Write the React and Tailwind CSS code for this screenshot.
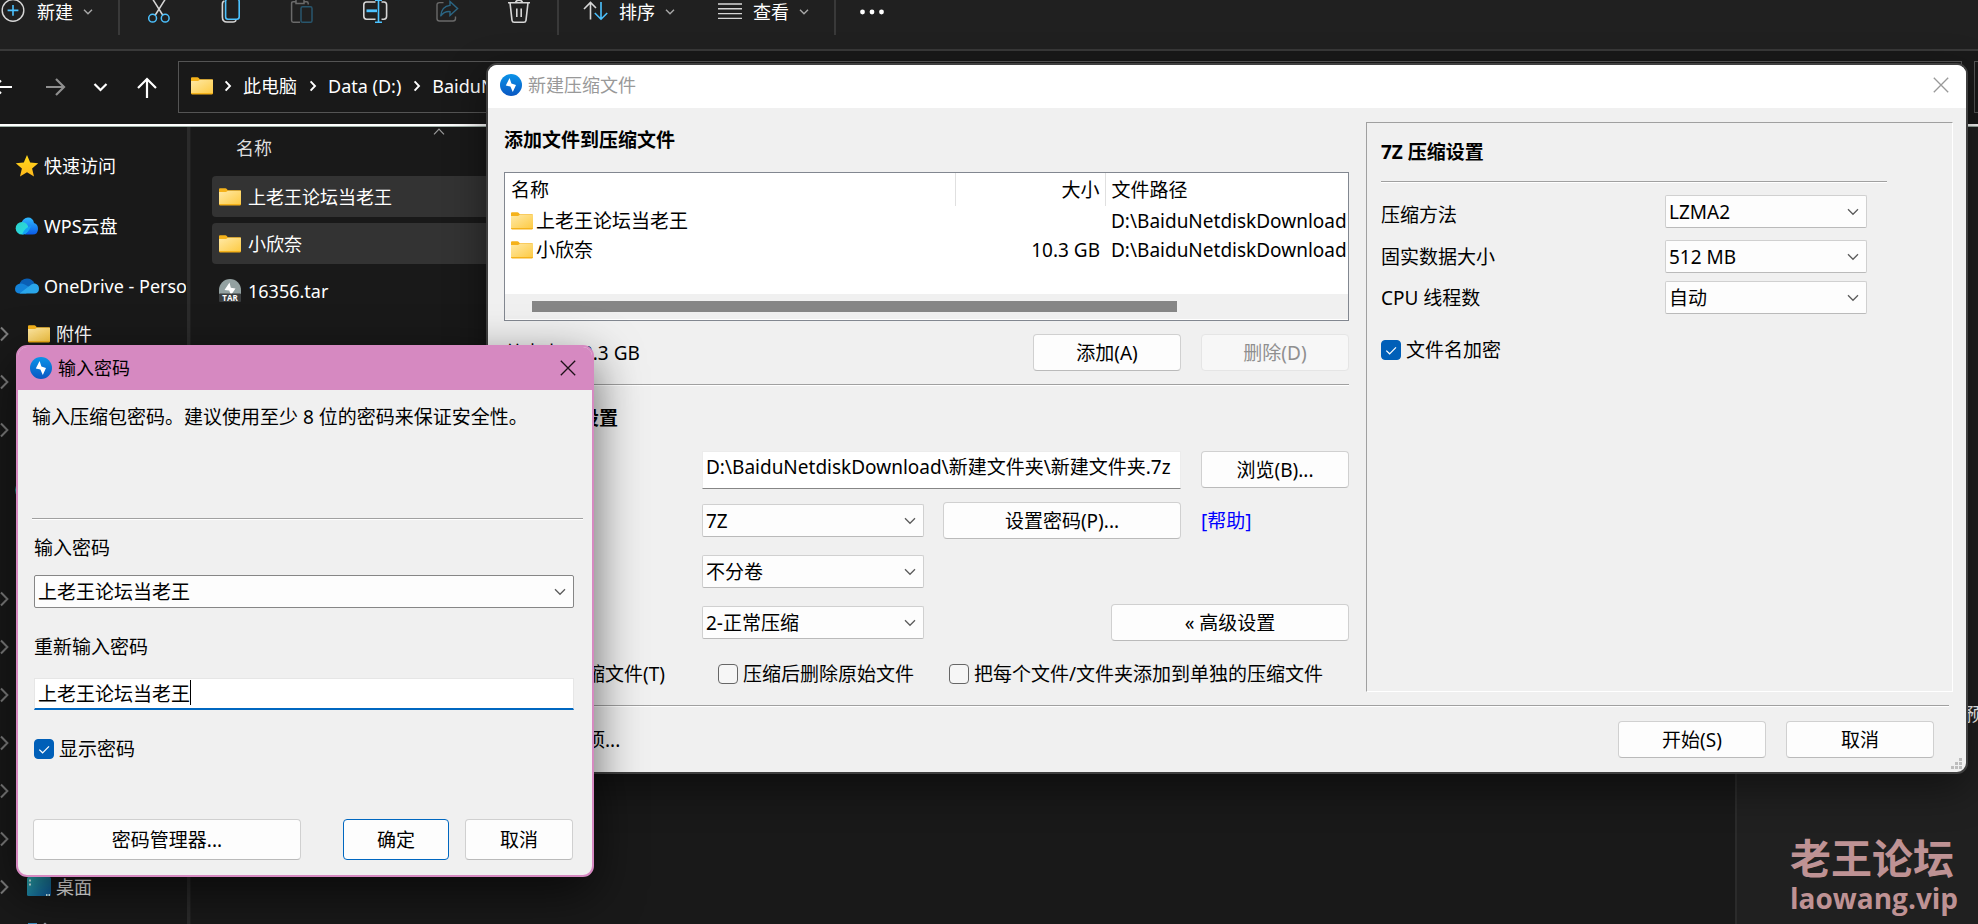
import React from "react";

const UI = "font-['Noto_Sans','Noto_Sans_CJK_SC',sans-serif]";

function Folder({ className = "" }) {
  return (
    <svg viewBox="0 0 22 18" className={"h-[18px] w-[22px] shrink-0 " + className} aria-hidden="true">
      <defs>
        <linearGradient id="folderFill" x1="0" y1="0" x2="1" y2="1">
          <stop offset="0" stopColor="#ffe9a6" />
          <stop offset="1" stopColor="#fdcb45" />
        </linearGradient>
      </defs>
      <path d="M0 1.2Q0 .3 1 .3H6.4Q7.2 .3 7.8 1L8.8 2.2H21Q22 2.2 22 3.2V16.6Q22 17.4 21 17.4H1Q0 17.4 0 16.6Z" fill="#f5b21a" />
      <path d="M0 4H7L9 2.8H22V16H0Z" fill="url(#folderFill)" />
    </svg>
  );
}

function BoltLogo() {
  return (
    <svg viewBox="0 0 22 22" className="size-[22px] shrink-0" aria-hidden="true">
      <defs>
        <linearGradient id="boltFill" x1="0" y1="0" x2="0" y2="1">
          <stop offset="0" stopColor="#0a93e8" />
          <stop offset="1" stopColor="#0a57c2" />
        </linearGradient>
      </defs>
      <circle cx="11" cy="11" r="11" fill="url(#boltFill)" />
      <path d="M9.6 4L5.8 11.6L10.4 12.6L12.8 18L16 10.9L11.4 9.6Z" fill="#fff" />
    </svg>
  );
}

function Close({ className }) {
  return (
    <svg viewBox="0 0 16 16" className={"size-4 " + className} fill="none" stroke="currentColor" strokeWidth="1.3" aria-hidden="true">
      <path d="M.8 .8L15.2 15.2M15.2 .8L.8 15.2" />
    </svg>
  );
}

function ChevronDown({ className = "" }) {
  return (
    <svg viewBox="0 0 12 8" className={"h-2 w-3 " + className} fill="none" stroke="currentColor" strokeWidth="1.3" aria-hidden="true">
      <path d="M1 1.2L6 6.3L11 1.2" />
    </svg>
  );
}

function SmallDown() {
  return (
    <svg viewBox="0 0 10 6" className="h-[6px] w-[10px]" fill="none" stroke="#a8a8a8" strokeWidth="1.4" aria-hidden="true">
      <path d="M1 .8L5 4.8L9 .8" />
    </svg>
  );
}

function Crumb() {
  return (
    <svg viewBox="0 0 8 12" className="h-3 w-2 shrink-0" fill="none" stroke="#fff" strokeWidth="1.9" aria-hidden="true">
      <path d="M1.6 1.4L6 6L1.6 10.6" />
    </svg>
  );
}

function TreeChevron() {
  return (
    <svg viewBox="0 0 9 16" className="h-4 w-[9px] shrink-0" fill="none" stroke="#7d7d7d" strokeWidth="2" aria-hidden="true">
      <path d="M1 1.5L7.4 8L1 14.5" />
    </svg>
  );
}

function Divider() {
  return <div className="h-[35px] w-[2px] bg-[#393939]" />;
}

function Toolbar() {
  const tool = "flex h-6 items-center justify-center";
  return (
    <div className="flex h-[51px] items-start border-b-2 border-[#393939] bg-[#202020] text-[18px] leading-6 text-white">
      <button className="flex w-[118px] shrink-0 items-center">
        <svg viewBox="0 0 24 24" className="ml-px h-6 w-6" fill="none" aria-hidden="true">
          <circle cx="12" cy="10.4" r="10.8" stroke="#d6d6d6" strokeWidth="1.4" />
          <path d="M12 5V15.800M6.600 10.400H17.400" stroke="#4cc2ff" strokeWidth="1.600" />
        </svg>
        <span className="ml-3">新建</span>
        <span className="ml-[10px]"><SmallDown /></span>
      </button>
      <Divider />
      <div className="flex w-[437px] shrink-0 justify-between pl-[27px] pr-[26px]">
        <button aria-label="剪切" className={tool}>
          <svg viewBox="0 0 24 24" className="size-6" fill="none" strokeWidth="1.500" aria-hidden="true">
            <path d="M5 -2L16 15.500M19 -2L8 15.500" stroke="#d6d6d6" />
            <circle cx="5.600" cy="18.200" r="3.900" stroke="#4cc2ff" />
            <circle cx="18.200" cy="18.200" r="3.900" stroke="#4cc2ff" />
          </svg>
        </button>
        <button aria-label="复制" className={tool}>
          <svg viewBox="0 0 24 24" className="size-6" fill="none" strokeWidth="1.600" aria-hidden="true">
            <path d="M5.500 1Q3.400 1.500 3.400 4V17Q3.400 22 8 22H14Q16.600 22 17 20.200" stroke="#d6d6d6" />
            <rect x="6.600" y="-1" width="13.600" height="20.200" rx="2.400" stroke="#4cc2ff" />
          </svg>
        </button>
        <button aria-label="粘贴" className={tool}>
          <svg viewBox="0 0 24 24" className="size-6" fill="none" strokeWidth="1.500" aria-hidden="true">
            <path d="M10 22.300H3.200Q1.600 22.300 1.600 20.600V3.400Q1.600 1.700 3.200 1.700H6M14 1.700H16.600Q18.200 1.700 18.200 3.400V4.500M6 0V3.400H14V0" stroke="#6a6a6a" />
            <rect x="11" y="6.800" width="11" height="15.500" rx="1.600" stroke="#28566d" />
          </svg>
        </button>
        <button aria-label="重命名" className={tool}>
          <svg viewBox="0 0 26 24" className="h-6 w-[26px]" fill="none" strokeWidth="1.600" aria-hidden="true">
            <path d="M13.500 2H4.500Q1.800 2 1.800 4.700V16.300Q1.800 19.200 4.500 19.200H13.500M19.500 2H22Q24.600 2 24.600 4.700V16.300Q24.600 19.200 22 19.200H19.500" stroke="#d6d6d6" />
            <path d="M16.500 -1V22M13 .200H20M13 22.300H20" stroke="#4cc2ff" />
            <path d="M4.500 10.800H15" stroke="#4cc2ff" strokeWidth="2.800" />
          </svg>
        </button>
        <button aria-label="共享" className={tool}>
          <svg viewBox="0 0 24 24" className="size-6" fill="none" strokeWidth="1.400" aria-hidden="true">
            <path d="M8.500 2.600H4.500Q2 2.600 2 5.100V18.500Q2 21 4.500 21H18Q20.500 21 20.500 18.500V16.500" stroke="#6a6a6a" />
            <path d="M15 1.600L22.600 8.600L15 15.400V11.600Q9 11.200 5.600 16.200Q6.600 6.200 15 5.400Z" stroke="#2b6684" />
          </svg>
        </button>
        <button aria-label="删除" className={tool}>
          <svg viewBox="0 0 24 24" className="size-6" fill="none" stroke="#d6d6d6" strokeWidth="1.600" aria-hidden="true">
            <path d="M1 2.700H23M8.600 2.400Q9 .200 12 .200Q15 .200 15.400 2.400M3 2.700L5 20.300Q5.300 22.200 7.200 22.200H16.800Q18.700 22.200 19 20.300L21 2.700M9.800 8.500V17M14.200 8.500V17" />
          </svg>
        </button>
      </div>
      <Divider />
      <button className="ml-[24px] flex items-center">
        <svg viewBox="0 0 26 24" className="h-6 w-[26px]" fill="none" strokeWidth="1.600" aria-hidden="true">
          <path d="M7.500 19.500V2.500M1 9L7.500 2.500L13 8" stroke="#d6d6d6" />
          <path d="M18 2V19M11.800 13L18 19.200L24.200 13" stroke="#4cc2ff" />
        </svg>
        <span className="ml-[10px]">排序</span>
        <span className="ml-[10px]"><SmallDown /></span>
      </button>
      <button className="ml-[43px] flex items-center">
        <svg viewBox="0 0 24 24" className="size-6" stroke="#d6d6d6" strokeWidth="1.400" aria-hidden="true">
          <path d="M0 4H24M0 8.800H24M0 13.600H24M0 18.400H24" />
        </svg>
        <span className="ml-[11px]">查看</span>
        <span className="ml-[10px]"><SmallDown /></span>
      </button>
      <div className="ml-[25px]"><Divider /></div>
      <button aria-label="更多" className="ml-[24px] flex h-6 items-center">
        <svg viewBox="0 0 24 6" className="h-[6px] w-6" fill="#fff" aria-hidden="true">
          <circle cx="2.500" cy="3" r="2.400" />
          <circle cx="12" cy="3" r="2.400" />
          <circle cx="21.500" cy="3" r="2.400" />
        </svg>
      </button>
    </div>
  );
}

function AddressBar() {
  return (
    <div className="flex h-[73px] items-start bg-[#191919] pt-[10px] text-[18px] leading-6 text-white">
      <div className="flex h-[52px] w-[178px] shrink-0 items-center">
        <svg viewBox="0 0 160 24" className="h-6 w-[160px]" fill="none" strokeWidth="2.200" aria-hidden="true">
          <path d="M12 12H-8M1 5.500L-6 12L1 18.500" stroke="#fff" />
          <path d="M46 12H64M56 4L64 12L56 20" stroke="#8f8f8f" />
          <path d="M94.500 9L100.500 15L106.500 9" stroke="#fff" />
          <path d="M147 23V4.500M138 13L147 4L156 13" stroke="#fff" />
        </svg>
      </div>
      <div className="flex h-[52px] min-w-0 flex-1 items-center overflow-hidden whitespace-nowrap border border-[#545454] pb-[2px] pl-3">
        <Folder />
        <span className="ml-[11px]"><Crumb /></span>
        <span className="ml-[11px]">此电脑</span>
        <span className="ml-[12px]"><Crumb /></span>
        <span className="ml-[11px]">Data (D:)</span>
        <span className="ml-[12px]"><Crumb /></span>
        <span className="ml-[11px]">BaiduNetdiskDownload</span>
      </div>
      <div className="ml-3 h-[52px] w-1 shrink-0 border border-r-0 border-[#545454]" />
    </div>
  );
}

function Sidebar() {
  const top = "flex h-12 items-center gap-[5px] pl-[15px]";
  const child = "flex h-12 items-center";
  return (
    <nav className="w-[186px] shrink-0 overflow-hidden whitespace-nowrap pt-[15px] text-[18px] leading-6 text-white">
      <div className="flex flex-col gap-3">
        <div className={top}>
          <svg viewBox="0 0 24 24" className="size-6 shrink-0" aria-hidden="true">
            <defs>
              <linearGradient id="star" x1="0" y1="0" x2="0" y2="1">
                <stop offset="0" stopColor="#ffd91a" />
                <stop offset="1" stopColor="#ffb81c" />
              </linearGradient>
            </defs>
            <path d="M12 1L15.200 8.600L23.200 9.300L17.100 14.600L19 22.600L12 18.300L5 22.600L6.900 14.600L.800 9.300L8.800 8.600Z" fill="url(#star)" />
          </svg>
          快速访问
        </div>
        <div className={top}>
          <svg viewBox="0 0 24 18" className="h-[18px] w-6 shrink-0" aria-hidden="true">
            <defs>
              <linearGradient id="cloudA" x1="0" y1="0" x2="1" y2="1">
                <stop offset="0" stopColor="#2bd0c8" />
                <stop offset="1" stopColor="#2adbe8" />
              </linearGradient>
              <linearGradient id="cloudB" x1="0" y1="0" x2="0" y2="1">
                <stop offset="0" stopColor="#2fb9ff" />
                <stop offset="1" stopColor="#0b5be8" />
              </linearGradient>
            </defs>
            <path d="M6 7Q8 .500 13 .500Q18 .500 19 6Q23 7 23 12Q23 17.500 17.500 17.500H10Z" fill="url(#cloudB)" />
            <circle cx="7" cy="11.300" r="6.300" fill="url(#cloudA)" />
            <path d="M7 17.600Q13 17.600 16 9Q10 10 7 17.600Z" fill="#12a5f5" />
          </svg>
          WPS云盘
        </div>
        <div className={top}>
          <svg viewBox="0 0 24 16" className="h-4 w-6 shrink-0" aria-hidden="true">
            <path d="M4 7Q6 .500 12 .500Q17 .500 19.500 5.500L12 11Z" fill="#0a5fb5" />
            <path d="M5 15.600Q0 15.600 0 10.800Q.500 6 6 5.600Q9 5.600 17 11L11 15.600Z" fill="#1382d8" />
            <path d="M4.500 15.600L14 8.200Q17 5.300 20 5.500Q24 6.500 24 10.800Q24 15.600 19 15.600Z" fill="#2aa6ea" />
          </svg>
          OneDrive - Personal
        </div>
      </div>
      <div className={child}>
        <TreeChevron />
        <Folder className="ml-[19px]" />
        <span className="ml-[6px]">附件</span>
      </div>
      <div className={child}><TreeChevron /></div>
      <div className={child}><TreeChevron /></div>
      <div className="mt-3 flex h-12 items-center pl-[15px]">
        <div className="size-5 rounded-full bg-[#1a9c94]" />
      </div>
      <div className="mt-[13px] h-12" />
      {[1, 2, 3, 4, 5, 6].map((n) => (
        <div key={n} className={child}><TreeChevron /></div>
      ))}
      <div className={child}>
        <TreeChevron />
        <svg viewBox="0 0 24 20" className="ml-[18px] h-5 w-6 shrink-0" aria-hidden="true">
          <defs>
            <linearGradient id="desk" x1="0" y1="0" x2="1" y2="1">
              <stop offset="0" stopColor="#2fb5b5" />
              <stop offset="1" stopColor="#0d5aa0" />
            </linearGradient>
          </defs>
          <rect width="24" height="19" rx="1.500" fill="url(#desk)" />
          <path d="M2 3.500H4M2 7.500H4M19 18H20.500M21.500 18H23" stroke="#dff" strokeWidth="2" />
        </svg>
        <span className="ml-[5px]">桌面</span>
      </div>
      <div className={child}>
        <svg viewBox="0 0 24 26" className="ml-[27px] h-[26px] w-6 shrink-0" aria-hidden="true">
          <rect x="1" y="1" width="9" height="24" fill="#3b8fc0" />
          <path d="M14 4L18 .500L22 4V25H14Z" fill="#9aa3ad" />
        </svg>
      </div>
    </nav>
  );
}

function FileRow({ icon, name, selected }) {
  return (
    <div className={"flex h-[41px] items-center gap-[7px] rounded-sm pl-[7px] " + (selected ? "bg-[#333333]" : "")}>
      {icon}
      <span>{name}</span>
    </div>
  );
}

function FileList() {
  return (
    <main className="min-w-0 flex-1 overflow-hidden text-[18px] leading-6 text-white">
      <div className="flex h-[49px] items-center pl-[45px] text-[#dedede]">
        <span className="mb-2">名称</span>
        <svg viewBox="0 0 12 7" className="mb-[40px] ml-[161px] h-[7px] w-3" fill="none" stroke="#9a9a9a" strokeWidth="1.200" aria-hidden="true">
          <path d="M1 6.300L6 1.200L11 6.300" />
        </svg>
      </div>
      <div className="flex flex-col gap-[6px] pl-[21px]">
        <FileRow selected icon={<Folder />} name="上老王论坛当老王" />
        <FileRow selected icon={<Folder />} name="小欣奈" />
        <FileRow
          name="16356.tar"
          icon={
            <svg viewBox="0 0 22 24" className="h-6 w-[22px] shrink-0" aria-hidden="true">
              <path d="M0 15V11A11 11 0 0 1 22 11V15Z" fill="#93a1a1" />
              <path d="M10.500 3.500L5.500 11L10.200 11.600L12 16L16.500 9.600L11.800 8.800Z" fill="#fff" />
              <rect y="14.500" width="22" height="8.500" rx="1" fill="#3a3d3f" />
              <text x="11" y="21.600" textAnchor="middle" fontFamily="Open Sans" fontWeight="700" fontSize="8" fill="#fff">TAR</text>
            </svg>
          }
        />
      </div>
    </main>
  );
}

function PushButton({ children, className = "", disabled }) {
  return (
    <button
      disabled={disabled}
      className={
        "h-[37px] shrink-0 rounded-[4px] border text-center leading-[24px] " +
        (disabled
          ? "border-[#e5e5e5] bg-[#f7f7f7] text-[#8f8f8f] "
          : "border-[#d0d0d0] border-b-[#bababa] bg-[#fdfdfd] text-black ") +
        className
      }
    >
      {children}
    </button>
  );
}

function Select({ id, value, className = "", border = "border-[#d0d0d0] border-b-[#bababa]", label }) {
  return (
    <div className={"relative shrink-0 " + className}>
      <select
        id={id}
        aria-label={label}
        defaultValue={value}
        className={"block h-[33px] w-full appearance-none rounded-[2px] border bg-[#fdfdfd] pl-[3px] pr-8 leading-[24px] text-black " + border}
      >
        <option>{value}</option>
      </select>
      <ChevronDown className="pointer-events-none absolute right-[8px] top-[13px] text-[#5c5c5c]" />
    </div>
  );
}

function Check({ label, checked, className = "" }) {
  return (
    <label className={"flex items-center gap-[5px] whitespace-nowrap " + className}>
      <span className="relative flex size-5 shrink-0">
        <input
          type="checkbox"
          defaultChecked={checked}
          className="peer size-5 appearance-none rounded-[4px] border border-[#666] bg-[#f6f6f6] checked:border-[#005fb8] checked:bg-[#005fb8]"
        />
        <svg viewBox="0 0 20 20" className="pointer-events-none absolute inset-0 hidden size-5 peer-checked:block" fill="none" stroke="#fff" strokeWidth="1.200" aria-hidden="true">
          <path d="M5.300 10.600L8.600 13.800L15 7.300" />
        </svg>
      </span>
      {label}
    </label>
  );
}

function Rule({ className = "" }) {
  return <div className={"h-[2px] shrink-0 border-b border-t border-b-white border-t-[#a0a0a0] " + className} />;
}

function ArchiveDialog() {
  const files = [
    { name: "上老王论坛当老王", size: "" },
    { name: "小欣奈", size: "10.3 GB" },
  ];
  return (
    <section
      aria-label="新建压缩文件"
      className="absolute left-[486px] right-[10px] top-[63px] overflow-hidden rounded-[11px] border-2 border-[#3f3f3f] bg-[#f0f0f0] text-[19px] leading-6 text-black shadow-[0_14px_40px_rgba(0,0,0,0.45)]"
    >
      <header className="flex h-[43px] items-center bg-white pb-[3px] pl-3 pr-[17px] text-[18px] text-[#999]">
        <BoltLogo />
        <h1 className="ml-[6px] flex-1">新建压缩文件</h1>
        <button aria-label="关闭"><Close className="text-[#999]" /></button>
      </header>

      <div className="flex gap-[17px] pl-4 pr-[13px]">
        <div className="min-w-0 flex-1 pt-5">
          <h2 className="font-bold">添加文件到压缩文件</h2>
          <div className="mt-5 h-[149px] overflow-hidden border border-[#828790] bg-white">
            <div className="mr-px h-[121px] overflow-hidden">
              <table className="w-full table-fixed border-collapse whitespace-nowrap">
                <thead>
                  <tr className="h-[33px] text-left">
                    <th className="w-[450px] border-r border-[#e0e0e0] p-0 pl-[6px] font-normal">名称</th>
                    <th className="w-[150px] border-r border-[#e0e0e0] p-0 pr-[5px] text-right font-normal">大小</th>
                    <th className="p-0 pl-[6px] font-normal">文件路径</th>
                  </tr>
                </thead>
                <tbody>
                  {files.map((f) => (
                    <tr key={f.name} className="h-[29px]">
                      <td className="p-0 pl-[6px]">
                        <span className="flex items-center gap-[3px]"><Folder />{f.name}</span>
                      </td>
                      <td className="p-0 pr-[5px] text-right">{f.size}</td>
                      <td className="overflow-hidden p-0 pl-[6px]">D:\BaiduNetdiskDownload</td>
                    </tr>
                  ))}
                </tbody>
              </table>
            </div>
            <div className="h-[25px] bg-[#f0f0f0] pl-[27px] pt-[7px]">
              <div className="h-[11px] w-[79%] bg-[#868686]" />
            </div>
          </div>

          <div className="mt-[13px] flex items-center gap-5">
            <p className="flex-1">总大小: 10.3 GB</p>
            <PushButton className="w-[148px]">添加(A)</PushButton>
            <PushButton className="w-[148px]" disabled>删除(D)</PushButton>
          </div>
          <Rule className="mt-[13px]" />

          <h2 className="mt-5 font-bold">压缩文件设置</h2>
          <div className="mt-[21px] flex flex-col gap-[14px]">
            <div className="flex h-[37px] items-center gap-5">
              <div className="flex min-w-0 flex-1 items-center">
                <label htmlFor="path" className="w-[198px] shrink-0">文件路径</label>
                <input
                  id="path"
                  defaultValue="D:\BaiduNetdiskDownload\新建文件夹\新建文件夹.7z"
                  className="h-[38px] min-w-0 flex-1 border border-[#ececec] border-b-[#868686] bg-white pb-[8px] pl-[3px] leading-[24px]"
                />
              </div>
              <PushButton className="w-[148px]">浏览(B)...</PushButton>
            </div>
            <div className="flex h-[37px] items-center">
              <label htmlFor="format" className="w-[198px] shrink-0">压缩格式</label>
              <Select id="format" value="7Z" className="w-[222px]" />
              <PushButton className="ml-[19px] mr-5 min-w-[120px] flex-1">设置密码(P)...</PushButton>
              <div className="w-[148px]"><a href="#help" className="text-[#0000ff]">[帮助]</a></div>
            </div>
            <div className="flex h-[37px] items-center">
              <label htmlFor="split" className="w-[198px] shrink-0">分卷大小</label>
              <Select id="split" value="不分卷" className="w-[222px]" />
            </div>
            <div className="flex h-[37px] items-center">
              <label htmlFor="level" className="w-[198px] shrink-0">压缩级别</label>
              <Select id="level" value="2-正常压缩" className="w-[222px]" />
              <PushButton className="ml-auto w-[238px]">« 高级设置</PushButton>
            </div>
            <div className="flex h-[37px] items-center">
              <Check label="测试压缩文件(T)" className="w-[214px]" />
              <Check label="压缩后删除原始文件" className="w-[231px]" />
              <Check label="把每个文件/文件夹添加到单独的压缩文件" />
            </div>
          </div>
        </div>

        <aside className="mt-[14px] w-[587px] shrink-0 border border-b-white border-l-[#a0a0a0] border-r-white border-t-[#a0a0a0] pl-[14px]">
          <h2 className="mt-[17px] font-bold">7Z 压缩设置</h2>
          <Rule className="mr-[65px] mt-[17px]" />
          <div className="mr-[85px] mt-3 flex flex-col">
            <div className="flex h-[45px] items-start justify-between">
              <label htmlFor="method" className="mt-2">压缩方法</label>
              <Select id="method" value="LZMA2" className="w-[202px]" />
            </div>
            <div className="flex h-[41px] items-start justify-between">
              <label htmlFor="solid" className="mt-[5px]">固实数据大小</label>
              <Select id="solid" value="512 MB" className="w-[202px]" />
            </div>
            <div className="flex items-start justify-between">
              <label htmlFor="threads" className="mt-[5px]">CPU 线程数</label>
              <Select id="threads" value="自动" className="w-[202px]" />
            </div>
          </div>
          <Check label="文件名加密" checked className="mt-6 w-fit" />
        </aside>
      </div>

      <Rule className="ml-4 mr-[17px] mt-[13px]" />
      <footer className="flex items-center gap-5 pb-[14px] pl-[79px] pr-8 pt-[14px]">
        <button className="mr-auto">选项...</button>
        <PushButton className="w-[148px]">开始(S)</PushButton>
        <PushButton className="w-[148px]">取消</PushButton>
      </footer>
      <svg viewBox="0 0 12 12" className="absolute bottom-[2px] right-[3px] size-3" fill="#bdbdbd" aria-hidden="true">
        <path d="M8 0h3v3h-3zM4 4h3v3h-3zM8 4h3v3h-3zM0 8h3v3h-3zM4 8h3v3h-3zM8 8h3v3h-3z" />
      </svg>
    </section>
  );
}

function PasswordDialog() {
  return (
    <section
      aria-label="输入密码"
      className="absolute left-[16px] top-[345px] w-[578px] overflow-hidden rounded-[11px] border-2 border-[#d689c1] bg-[#f0f0f0] text-[19px] leading-6 text-black shadow-[0_16px_48px_rgba(0,0,0,0.6)]"
    >
      <header className="flex h-[43px] items-center bg-[#d689c1] pb-[2px] pl-3 pr-4 text-[18px]">
        <BoltLogo />
        <h1 className="ml-[6px] flex-1">输入密码</h1>
        <button aria-label="关闭"><Close className="text-[#1c1018]" /></button>
      </header>
      <div className="pl-4 pr-[18px]">
        <p className="ml-[-2px] mt-[15px] h-[113px] whitespace-nowrap">输入压缩包密码。建议使用至少 8 位的密码来保证安全性。</p>
        <Rule className="ml-[-2px] mr-[-9px]" />
        <label htmlFor="pwd" className="mt-4 block">输入密码</label>
        <Select id="pwd" value="上老王论坛当老王" className="mt-[15px] w-full" border="border-[#868686]" />
        <label htmlFor="pwd2" className="mt-[27px] block">重新输入密码</label>
        <div className="relative mt-[19px]">
          <input
            id="pwd2"
            defaultValue="上老王论坛当老王"
            className="block h-[32px] w-full border border-b-2 border-[#e6e6e6] border-b-[#0067c0] bg-white pb-[2px] pl-[3px] leading-[24px] outline-none"
          />
          <span className="absolute left-[156px] top-[2px] h-[25px] w-px bg-black" />
        </div>
        <Check label="显示密码" checked className="mt-[27px] w-fit" />
        <div className="mb-[15px] ml-[-1px] mt-[58px] flex items-center">
          <button className="h-[41px] w-[268px] rounded-[4px] border border-[#d0d0d0] border-b-[#bababa] bg-[#fdfdfd]">密码管理器...</button>
          <button className="ml-auto h-[41px] w-[106px] rounded-[4px] border border-[#0067c0] bg-[#fdfdfd]">确定</button>
          <button className="ml-4 mr-px h-[41px] w-[108px] rounded-[4px] border border-[#d0d0d0] border-b-[#bababa] bg-[#fdfdfd]">取消</button>
        </div>
      </div>
    </section>
  );
}

export default function App() {
  return (
    <div className={"relative flex h-screen flex-col overflow-hidden bg-[#191919] " + UI}>
      <Toolbar />
      <AddressBar />
      <div className="h-[3px] shrink-0 border-b border-[#9fb0a8] bg-white" />
      <div className="flex min-h-0 flex-1">
        <Sidebar />
        <div className="ml-px w-1 shrink-0 border-r border-[#202020] bg-[#2b2b2b]" />
        <FileList />
        <aside className="flex w-[243px] shrink-0 items-center overflow-hidden whitespace-nowrap border-l-2 border-[#2b2b2b] bg-[#202020] pl-[174px] text-[18px] text-white">
          <p className="mt-[378px]">选择要预览的文件。</p>
        </aside>
      </div>
      <ArchiveDialog />
      <PasswordDialog />
      <div className="absolute bottom-[9px] right-[20px] w-[168px] font-['Open_Sans','Noto_Sans_CJK_SC',sans-serif] font-bold text-[#be9294]">
        <p className="text-[41px] leading-[46px]">老王论坛</p>
        <p className="text-[28px] leading-[34px]">laowang.vip</p>
      </div>
    </div>
  );
}
